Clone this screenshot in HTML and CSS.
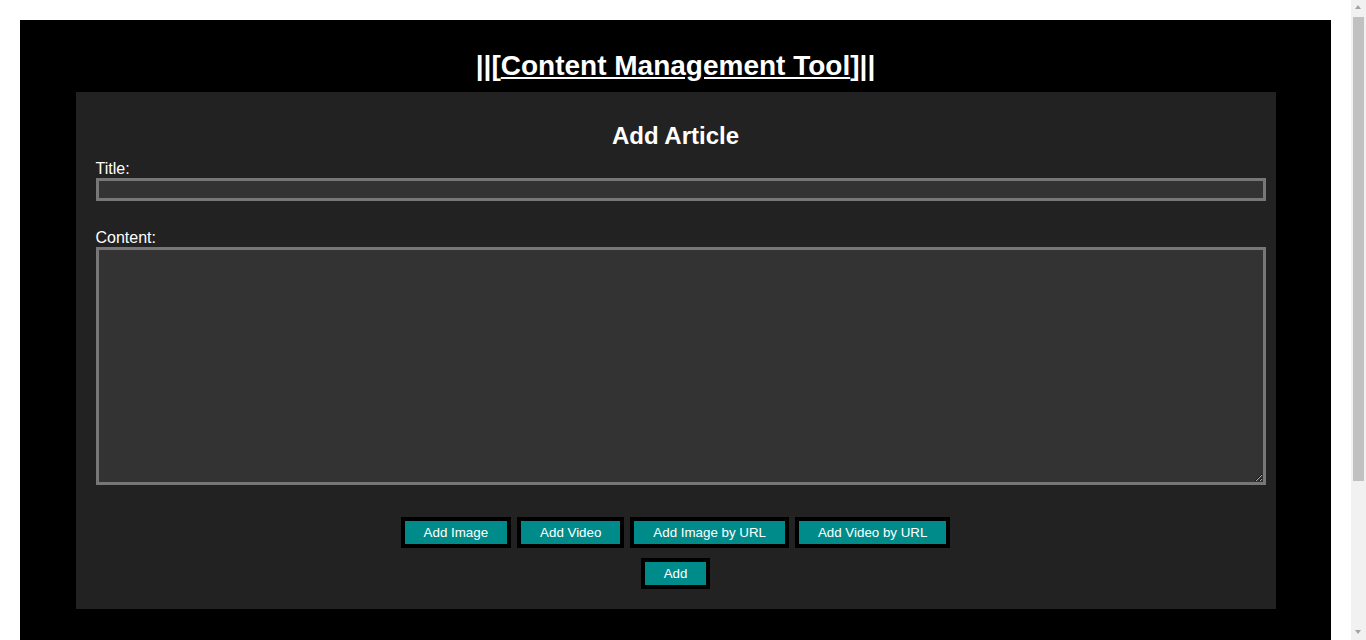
FILE: index.html
```html
<!DOCTYPE html>
<html>
<head>
<meta charset="utf-8">
<title>Content Management Tool</title>
<link rel="stylesheet" href="styles.css">
</head>
<body>
<div class="page">
  <h1 class="site-title">||[<a href="#" class="site-link">Content Management Tool</a>]||</h1>
  <div class="panel">
    <h2 class="panel-title">Add Article</h2>
    <form class="article-form">
      <label class="field-label" for="title">Title:</label>
      <input class="text-input" id="title" type="text">
      <label class="field-label" for="content">Content:</label>
      <textarea class="text-area" id="content"></textarea>
      <div class="button-row">
        <button type="button" class="btn">Add Image</button>
        <button type="button" class="btn">Add Video</button>
        <button type="button" class="btn">Add Image by URL</button>
        <button type="button" class="btn">Add Video by URL</button>
      </div>
      <div class="button-row">
        <button type="button" class="btn">Add</button>
      </div>
    </form>
  </div>
</div>
<div class="scrollbar">
  <div class="scroll-arrow scroll-up"></div>
  <div class="scroll-track"><div class="scroll-thumb"></div></div>
  <div class="scroll-arrow scroll-down"></div>
</div>
</body>
</html>
```
FILE: styles.css
```css
html, body {
  margin: 0;
  padding: 0;
}
body {
  background: #fff;
  margin: 20px 35px 20px 20px;
  font-family: "Liberation Sans", Arial, sans-serif;
  color: #fff;
}
.page {
  background: #000;
  padding: 30px 0 40px;
  min-height: 730px;
}
.site-title {
  margin: 0 0 10px;
  font-size: 28px;
  line-height: 32px;
  font-weight: bold;
  text-align: center;
  color: #fff;
}
.site-link {
  color: #fff;
  text-decoration: underline;
}
.panel {
  background: #222;
  width: 1160px;
  margin: 0 auto;
  padding: 20px;
}
.panel-title {
  margin: 10px 0;
  font-size: 24px;
  line-height: 28px;
  font-weight: bold;
  text-align: center;
}
.article-form {
  margin: 0;
}
.field-label {
  display: block;
  font-size: 16px;
  line-height: 18px;
}
.text-input {
  display: block;
  box-sizing: content-box;
  width: 100%;
  height: 17px;
  margin: 0 0 28px;
  padding: 0 2px;
  border: 3px solid #777;
  background: #333;
  color: #fff;
  font-family: "Liberation Sans", Arial, sans-serif;
  font-size: 13px;
}
.text-area {
  display: block;
  box-sizing: content-box;
  width: 100%;
  height: 228px;
  margin: 0 0 32px;
  padding: 2px;
  border: 3px solid #777;
  background: #333;
  color: #fff;
  font-family: "Liberation Mono", monospace;
  font-size: 13px;
}
.button-row {
  display: flex;
  justify-content: center;
  gap: 6px;
  margin-bottom: 10px;
}
.button-row:last-child {
  margin-bottom: 0;
}
.btn {
  background: #008b8b;
  color: #fff;
  border: 4px solid #000;
  padding: 4px 19px;
  font-family: "Liberation Sans", Arial, sans-serif;
  font-size: 13.333px;
  line-height: 15px;
  cursor: pointer;
}
.scrollbar {
  position: fixed;
  top: 0;
  right: 0;
  width: 15px;
  height: 100vh;
  background: #f1f1f1;
  display: flex;
  flex-direction: column;
}
.scroll-arrow {
  height: 15px;
  flex: none;
  position: relative;
}
.scroll-arrow::after {
  content: "";
  position: absolute;
  left: 4px;
  top: 5px;
  border-left: 3.5px solid transparent;
  border-right: 3.5px solid transparent;
}
.scroll-up::after {
  border-bottom: 4px solid #a3a3a3;
}
.scroll-down::after {
  border-top: 4px solid #a3a3a3;
}
.scroll-track {
  flex: 1;
  padding: 2px 2px 0;
}
.scroll-thumb {
  height: 464px;
  background: #c1c1c1;
}
```
